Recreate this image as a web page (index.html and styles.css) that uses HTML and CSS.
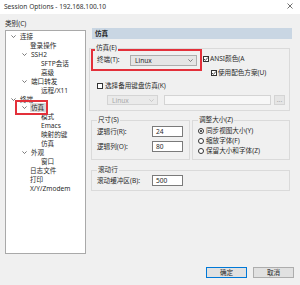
FILE: index.html
```html
<!DOCTYPE html>
<html>
<head>
<meta charset="utf-8">
<link rel="stylesheet" href="styles.css">
</head>
<body>
<div class="win">
  <div class="titlebar">
    <span class="title">Session Options - 192.168.100.10</span>
    <svg class="close" width="6" height="6" viewBox="0 0 6 6"><path d="M0.5 0.5 L5.5 5.5 M5.5 0.5 L0.5 5.5" stroke="#333" stroke-width="0.7"/></svg>
  </div>
  <div class="content">
    <div class="catlabel">类别(C)</div>
    <div class="cols">
      <div class="tree">
        <div class="row l0c"><svg class="chev" width="5" height="3" viewBox="0 0 5 3"><path d="M0.4 0.4 L2.5 2.5 L4.6 0.4" fill="none" stroke="#444" stroke-width="0.7"/></svg><span>连接</span></div>
        <div class="row l1">登录操作</div>
        <div class="row l1c"><svg class="chev" width="5" height="3" viewBox="0 0 5 3"><path d="M0.4 0.4 L2.5 2.5 L4.6 0.4" fill="none" stroke="#444" stroke-width="0.7"/></svg><span>SSH2</span></div>
        <div class="row l2">SFTP会话</div>
        <div class="row l2">高级</div>
        <div class="row l1c"><svg class="chev" width="5" height="3" viewBox="0 0 5 3"><path d="M0.4 0.4 L2.5 2.5 L4.6 0.4" fill="none" stroke="#444" stroke-width="0.7"/></svg><span>端口转发</span></div>
        <div class="row l2">远程/X11</div>
        <div class="row l0c"><svg class="chev" width="5" height="3" viewBox="0 0 5 3"><path d="M0.4 0.4 L2.5 2.5 L4.6 0.4" fill="none" stroke="#444" stroke-width="0.7"/></svg><span>终端</span></div>
        <div class="row l1c"><svg class="chev" width="5" height="3" viewBox="0 0 5 3"><path d="M0.4 0.4 L2.5 2.5 L4.6 0.4" fill="none" stroke="#444" stroke-width="0.7"/></svg><span class="sel">仿真</span></div>
        <div class="row l2">模式</div>
        <div class="row l2">Emacs</div>
        <div class="row l2">映射的键</div>
        <div class="row l2">仿真</div>
        <div class="row l1c"><svg class="chev" width="5" height="3" viewBox="0 0 5 3"><path d="M0.4 0.4 L2.5 2.5 L4.6 0.4" fill="none" stroke="#444" stroke-width="0.7"/></svg><span>外观</span></div>
        <div class="row l2">窗口</div>
        <div class="row l1">日志文件</div>
        <div class="row l1">打印</div>
        <div class="row l1">X/Y/Zmodem</div>
        <div class="treemark"></div>
      </div>
      <div class="panel">
        <div class="header">仿真</div>
        <div class="group g1">
          <span class="legend">仿真(E)</span>
          <div class="r1">
            <div class="redbox">
              <span class="termlabel">终端(T):</span>
              <div class="select"><span>Linux</span><svg width="5" height="3" viewBox="0 0 5 3"><path d="M0.4 0.4 L2.5 2.5 L4.6 0.4" fill="none" stroke="#555" stroke-width="0.7"/></svg></div>
            </div>
            <div class="check ansi"><span class="box on"><svg width="6" height="6" viewBox="0 0 6 6"><path d="M1 3 L2.4 4.4 L5 1.4" fill="none" stroke="#222" stroke-width="0.8"/></svg></span><span class="clip">ANSI颜色(A</span></div>
          </div>
          <div class="check r2"><span class="box on"><svg width="6" height="6" viewBox="0 0 6 6"><path d="M1 3 L2.4 4.4 L5 1.4" fill="none" stroke="#222" stroke-width="0.8"/></svg></span><span>使用配色方案(U)</span></div>
          <div class="check r3"><span class="box"></span><span>选择备用键盘仿真(K)</span></div>
          <div class="r4">
            <div class="select dis"><span>Linux</span><svg width="5" height="3" viewBox="0 0 5 3"><path d="M0.4 0.4 L2.5 2.5 L4.6 0.4" fill="none" stroke="#bbb" stroke-width="0.7"/></svg></div>
            <div class="field dis"></div>
            <div class="dots">...</div>
          </div>
        </div>
        <div class="pair">
          <div class="group g2">
            <span class="legend">尺寸(S)</span>
            <div class="frow"><span class="flabel">逻辑行(R):</span><div class="field">24</div></div>
            <div class="frow"><span class="flabel">逻辑列(O):</span><div class="field">80</div></div>
          </div>
          <div class="group g3">
            <span class="legend">调整大小(Z)</span>
            <div class="radio"><span class="rb on"></span><span>同步视图大小(Y)</span></div>
            <div class="radio"><span class="rb"></span><span>缩放字体(F)</span></div>
            <div class="radio"><span class="rb"></span><span>保留大小和字体(Z)</span></div>
          </div>
        </div>
        <div class="group g4">
          <span class="legend">滚动行</span>
          <div class="frow"><span class="flabel">滚动缓冲区(B):</span><div class="field">500</div></div>
        </div>
      </div>
    </div>
    <div class="buttons">
      <div class="btn def">确定</div>
      <div class="btn">取消</div>
    </div>
  </div>
</div>
</body>
</html>
```

FILE: styles.css
```css
* { box-sizing: border-box; }
html, body { margin: 0; padding: 0; }
body {
  width: 300px;
  height: 285px;
  background: #f0f0f0;
  font-family: "Noto Sans", "Noto Sans CJK SC", sans-serif;
  font-size: 6.6px;
  color: #2a2a2a;
  overflow: hidden;
}
.win { width: 300px; height: 285px; }
.titlebar {
  height: 14px;
  background: #ffffff;
  display: flex;
  align-items: center;
  justify-content: space-between;
  padding: 0 7px 1px 4px;
}
.title { font-size: 6.6px; line-height: 8px; color: #333; }
.close { margin-top: -2px; }
.content { padding: 0; }
.catlabel { margin: 6px 0 0 5px; line-height: 8px; height: 8px; }
.cols { display: flex; align-items: flex-start; margin-top: 0; }
.tree {
  position: relative;
  margin: 2px 0 0 5px;
  width: 81px;
  height: 224px;
  background: #ffffff;
  border: 1px solid #a9a9a9;
  padding-top: 1px;
}
.row { height: 8.95px; line-height: 9px; white-space: nowrap; display: flex; align-items: center; }
.chev { flex: none; margin-right: 4px; }
.l0c { padding-left: 5px; }
.l1c { padding-left: 16px; }
.l1 { padding-left: 24px; }
.l2 { padding-left: 35px; }
.sel { background: #d9d9d9; padding: 0 3px 0 1px; margin-left: -1px; line-height: 9px; }
.treemark {
  position: absolute;
  left: 9px;
  top: 69px;
  width: 33px;
  height: 15px;
  border: 2px solid #e3303a;
}
.panel { margin-left: 3px; width: 201px; }
.header {
  height: 11px;
  margin: 0 -2px 0 3px;
  background: #c9d6e3;
  font-weight: bold;
  line-height: 11px;
  padding-left: 3px;
}
.group { position: relative; border: 1px solid #dadada; }
.legend {
  position: absolute;
  top: -5px;
  left: 5px;
  line-height: 8px;
  padding: 0 1px;
  background: #f0f0f0;
}
.g1 { margin-top: 9px; height: 63px; }
.r1 { display: flex; align-items: flex-start; }
.redbox {
  margin-left: 1px;
  width: 111px;
  height: 22px;
  border: 2px solid #e3303a;
  display: flex;
  align-items: center;
  padding-left: 4px;
}
.termlabel { width: 33px; line-height: 8px; }
.select {
  width: 67px;
  height: 11px;
  background: #e5e5e5;
  border: 1px solid #adadad;
  display: flex;
  align-items: center;
  justify-content: space-between;
  padding: 0 3px 0 4px;
  line-height: 9px;
}
.check { display: flex; align-items: center; line-height: 8px; height: 8px; white-space: nowrap; }
.box {
  flex: none;
  width: 6px;
  height: 6px;
  border: 1px solid #333;
  background: #fff;
  margin-right: 1px;
  position: relative;
}
.box svg { position: absolute; left: -1px; top: -1px; }
.ansi { margin: 6px 0 0 1px; width: 86px; overflow: hidden; }
.r2 { margin: -2px 0 0 121px; }
.r3 { margin: 5px 0 0 7px; }
.r3 .box { margin-right: 2px; }
.r4 { display: flex; margin: 5px 0 0 17px; }
.select.dis { width: 51px; height: 10px; background: #eaeaea; border-color: #d4d4d4; color: #a8a8a8; }
.field {
  width: 31px;
  height: 11px;
  background: #fff;
  border: 1px solid #7a7a7a;
  line-height: 9px;
  padding-left: 3px;
}
.field.dis { width: 107px; height: 10px; margin-left: 6px; background: #f7f7f7; border-color: #d4d4d4; }
.dots {
  width: 11px;
  height: 10px;
  margin-left: 3px;
  background: #e5e5e5;
  border: 1px solid #d4d4d4;
  color: #a8a8a8;
  text-align: center;
  line-height: 7px;
}
.pair { display: flex; margin-top: 9px; }
.g2 { margin-left: 2px; width: 99px; height: 40px; padding: 5px 0 0 5px; }
.g3 { margin-left: 2px; width: 98px; height: 40px; padding: 5px 0 0 5px; }
.frow { display: flex; align-items: center; }
.g2 .frow + .frow { margin-top: 4px; }
.flabel { width: 55px; line-height: 8px; white-space: nowrap; }
.radio { display: flex; align-items: center; height: 10px; line-height: 8px; white-space: nowrap; }
.rb {
  flex: none;
  width: 6px;
  height: 6px;
  border-radius: 50%;
  border: 1px solid #333;
  background: #fff;
  margin-right: 2px;
  position: relative;
}
.rb.on::after {
  content: "";
  position: absolute;
  left: 1px;
  top: 1px;
  width: 2px;
  height: 2px;
  border-radius: 50%;
  background: #222;
}
.g4 { margin: 10px 0 0 2px; width: 199px; height: 21px; padding: 4px 0 0 5px; }
.buttons { display: flex; justify-content: flex-end; gap: 6px; margin-top: 13px; padding-right: 6px; }
.btn {
  width: 41px;
  height: 11px;
  background: #e1e1e1;
  border: 1px solid #adadad;
  text-align: center;
  line-height: 9px;
}
.btn.def { border-color: #0078d7; }
```
